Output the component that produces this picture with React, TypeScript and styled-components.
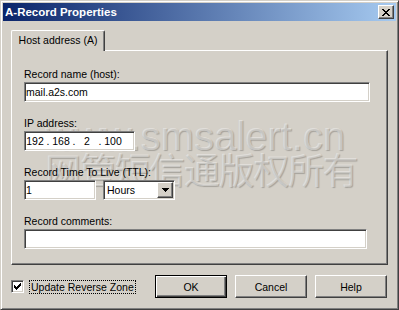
import React from 'react';
import styled, { createGlobalStyle, css } from 'styled-components';

const GlobalStyle = createGlobalStyle`
  html, body {
    margin: 0;
    padding: 0;
    background: #d4d0c8;
  }
  body {
    font-family: 'Liberation Sans', Arial, sans-serif;
    font-size: 10.5px;
    color: #000;
  }
`;

const sunken = css`
  border: 1px solid;
  border-color: #808080 #ffffff #ffffff #808080;
  box-shadow: inset 1px 1px #404040, inset -1px -1px #d4d0c8;
`;

const raised = css`
  border: 1px solid;
  border-color: #ffffff #404040 #404040 #ffffff;
  box-shadow: inset -1px -1px #808080;
`;

const Window = styled.div`
  position: relative;
  width: 399px;
  height: 310px;
  box-sizing: border-box;
  background: #d4d0c8;
  border: 1px solid;
  border-color: #d4d0c8 #404040 #404040 #d4d0c8;
  box-shadow: inset 1px 1px #ffffff, inset -1px -1px #808080;
  padding: 2px;
  display: flex;
  flex-direction: column;
  overflow: hidden;
`;

const TitleBar = styled.div`
  height: 18px;
  flex-shrink: 0;
  background: linear-gradient(to right, #0a246a, #a6caf0);
  display: flex;
  align-items: center;
  justify-content: space-between;
  padding: 0 2px 0 2px;
`;

const Title = styled.span`
  color: #fff;
  font-weight: bold;
  font-size: 11.5px;
  line-height: 18px;
`;

const CloseButton = styled.div`
  width: 16px;
  height: 14px;
  box-sizing: border-box;
  background: #d4d0c8;
  ${raised};
  display: flex;
  align-items: center;
  justify-content: center;
`;

const Body = styled.div`
  position: relative;
  z-index: 1;
  padding: 9px 8px 0 8px;
  display: flex;
  flex-direction: column;
`;

const TabStrip = styled.div`
  display: flex;
  height: 20px;
  position: relative;
  z-index: 1;
`;

const Tab = styled.div`
  width: 94px;
  height: 21px;
  box-sizing: border-box;
  background: #d4d0c8;
  border-top: 1px solid #fff;
  border-left: 1px solid #fff;
  border-right: 1px solid #404040;
  box-shadow: inset -1px 0 #808080;
  border-top-left-radius: 2px;
  border-top-right-radius: 2px;
  display: flex;
  align-items: center;
  justify-content: center;
  padding-bottom: 2px;
`;

const Panel = styled.div`
  height: 215px;
  box-sizing: border-box;
  border: 1px solid;
  border-color: #ffffff #404040 #404040 #ffffff;
  box-shadow: inset -1px -1px #808080;
  padding: 17px 12px 0 12px;
  display: flex;
  flex-direction: column;
  gap: 15px;
`;

const Field = styled.div`
  display: flex;
  flex-direction: column;
  gap: 1px;
`;

const Label = styled.div`
  height: 13px;
  line-height: 13px;
`;

const TextBox = styled.div<{ $width: number }>`
  width: ${p => p.$width}px;
  height: 20px;
  box-sizing: border-box;
  background: #fff;
  ${sunken};
  padding: 0 0 0 1px;
  line-height: 18px;
  white-space: nowrap;
`;

const IpBox = styled(TextBox)`
  display: flex;
  padding: 0;
`;

const Octet = styled.span`
  width: 20px;
  text-align: center;
`;

const Dot = styled.span`
  width: 6px;
  text-align: center;
`;

const Row = styled.div`
  display: flex;
  gap: 7px;
`;

const SelectBox = styled.div`
  width: 72px;
  height: 20px;
  box-sizing: border-box;
  background: #fff;
  ${sunken};
  padding: 1px;
  display: flex;
`;

const SelectValue = styled.span`
  flex: 1;
  padding-left: 2px;
  line-height: 16px;
`;

const DropButton = styled.div`
  width: 16px;
  height: 16px;
  box-sizing: border-box;
  background: #d4d0c8;
  ${raised};
  display: flex;
  align-items: center;
  justify-content: center;
`;

const BottomBar = styled.div`
  display: flex;
  align-items: center;
  padding: 10px 1px 0 0;
`;

const CheckRow = styled.div`
  display: flex;
  align-items: center;
  gap: 5px;
`;

const CheckBox = styled.div`
  width: 13px;
  height: 13px;
  box-sizing: border-box;
  background: #fff;
  ${sunken};
  display: flex;
  align-items: center;
  justify-content: center;
`;

const CheckLabel = styled.span`
  border: 1px dotted #000;
  padding: 0 1px;
  line-height: 12px;
`;

const Buttons = styled.div`
  margin-left: auto;
  display: flex;
  gap: 8px;
`;

const Button = styled.div<{ $default?: boolean }>`
  width: 72px;
  height: 23px;
  box-sizing: border-box;
  background: #d4d0c8;
  display: flex;
  align-items: center;
  justify-content: center;
  ${p =>
    p.$default
      ? css`
          border: 1px solid #000;
          box-shadow: inset 1px 1px #fff, inset -1px -1px #404040, inset -2px -2px #808080;
        `
      : raised};
`;

const Watermark = styled.div`
  position: absolute;
  z-index: 0;
  left: 44px;
  top: 115px;
  pointer-events: none;
  color: rgba(255, 255, 255, 0.4);
  text-shadow: 1px 1px 1px rgba(0, 0, 0, 0.22);
  white-space: nowrap;
`;

const WatermarkUrl = styled.div`
  font-family: 'Liberation Sans', Arial, sans-serif;
  font-size: 40px;
  line-height: 40px;
`;

const WatermarkCn = styled.div`
  font-family: 'Noto Sans CJK SC', sans-serif;
  font-size: 36px;
  letter-spacing: -1.3px;
  line-height: 38px;
  margin-top: -7px;
`;

const pixels = (rows: string[]) =>
  rows
    .flatMap((r, y) =>
      r.split('').map((c, x) => (c === 'X' ? `M${x} ${y}h1v1h-1z` : ''))
    )
    .join('');

const CloseIcon = () => (
  <svg width="8" height="7" viewBox="0 0 8 7" shapeRendering="crispEdges">
    <path
      fill="#000"
      d={pixels(['XX....XX', '.XX..XX.', '..XXXX..', '...XX...', '..XXXX..', '.XX..XX.', 'XX....XX'])}
    />
  </svg>
);

const CheckIcon = () => (
  <svg width="7" height="7" viewBox="0 0 7 7" shapeRendering="crispEdges">
    <path
      fill="#000"
      d={pixels(['......X', '.....XX', 'X...XXX', 'XX.XXX.', 'XXXXX..', '.XXX...', '..X....'])}
    />
  </svg>
);

const DownArrow = () => (
  <svg width="7" height="4" viewBox="0 0 7 4" shapeRendering="crispEdges">
    <path fill="#000" d={pixels(['XXXXXXX', '.XXXXX.', '..XXX..', '...X...'])} />
  </svg>
);

function App() {
  return (
    <>
      <GlobalStyle />
      <Window>
        <TitleBar>
          <Title>A-Record Properties</Title>
          <CloseButton>
            <CloseIcon />
          </CloseButton>
        </TitleBar>
        <Watermark>
          <WatermarkUrl>www.smsalert.cn</WatermarkUrl>
          <WatermarkCn>网管短信通版权所有</WatermarkCn>
        </Watermark>
        <Body>
          <TabStrip>
            <Tab>Host address (A)</Tab>
          </TabStrip>
          <Panel>
            <Field>
              <Label>Record name (host):</Label>
              <TextBox $width={346}>mail.a2s.com</TextBox>
            </Field>
            <Field>
              <Label>IP address:</Label>
              <IpBox $width={111}>
                <Octet>192</Octet>
                <Dot>.</Dot>
                <Octet>168</Octet>
                <Dot>.</Dot>
                <Octet>2</Octet>
                <Dot>.</Dot>
                <Octet>100</Octet>
              </IpBox>
            </Field>
            <Field>
              <Label>Record Time To Live (TTL):</Label>
              <Row>
                <TextBox $width={72}>1</TextBox>
                <SelectBox>
                  <SelectValue>Hours</SelectValue>
                  <DropButton>
                    <DownArrow />
                  </DropButton>
                </SelectBox>
              </Row>
            </Field>
            <Field>
              <Label>Record comments:</Label>
              <TextBox $width={343} />
            </Field>
          </Panel>
          <BottomBar>
            <CheckRow>
              <CheckBox>
                <CheckIcon />
              </CheckBox>
              <CheckLabel>Update Reverse Zone</CheckLabel>
            </CheckRow>
            <Buttons>
              <Button $default>OK</Button>
              <Button>Cancel</Button>
              <Button>Help</Button>
            </Buttons>
          </BottomBar>
        </Body>
      </Window>
    </>
  );
}

export default App;
